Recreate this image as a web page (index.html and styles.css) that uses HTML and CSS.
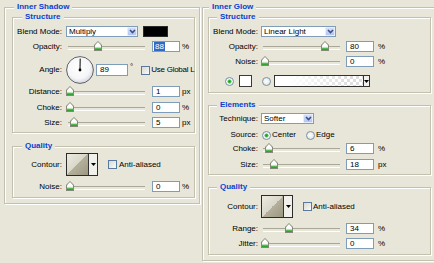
FILE: index.html
```html
<!DOCTYPE html>
<html>

<head>
    <meta charset="utf-8" />
    <title>Layer Style</title>
    <link rel="stylesheet" href="styles.css">
</head>

<body>
    <div class="dialog">
        <!-- Inner Shadow -->
        <fieldset class="group panel panel-left">
            <legend>Inner Shadow</legend>
            <fieldset class="group sub">
                <legend>Structure</legend>
                <div class="row">
                    <span class="lbl">Blend Mode:</span>
                    <span class="select sel-multiply">Multiply<span class="drop"><svg width="7" height="5" viewBox="0 0 7 5"><path d="M1 1l2.5 2.5L6 1" fill="none" stroke="#3c4f80" stroke-width="1.6"/></svg></span></span>
                    <span class="swatch-black"></span>
                </div>
                <div class="row">
                    <span class="lbl">Opacity:</span>
                    <span class="slider"><span class="thumb" style="left:28px"></span></span>
                    <span class="field focus"><span class="selected">88</span></span>
                    <span class="unit">%</span>
                </div>
                <div class="row row-angle">
                    <span class="lbl">Angle:</span>
                    <svg class="dial" width="28" height="28" viewBox="0 0 28 28">
                        <defs>
                            <radialGradient id="dialFill" cx="45%" cy="40%" r="60%">
                                <stop offset="0" stop-color="#ffffff"/>
                                <stop offset="0.7" stop-color="#f6f6f8"/>
                                <stop offset="1" stop-color="#d6d7de"/>
                            </radialGradient>
                        </defs>
                        <circle cx="14" cy="14" r="13.4" fill="url(#dialFill)" stroke="#5f6168" stroke-width="1"/>
                        <path d="M14 14L14.2 2.6" stroke="#000" stroke-width="1"/>
                        <circle cx="14" cy="14" r="1.4" fill="#000"/>
                    </svg>
                    <span class="field field-angle">89</span>
                    <span class="unit deg">°</span>
                    <span class="check"></span>
                    <span class="check-text global">Use Global L</span>
                </div>
                <div class="row mt2">
                    <span class="lbl">Distance:</span>
                    <span class="slider"><span class="thumb" style="left:0px"></span></span>
                    <span class="field">1</span>
                    <span class="unit">px</span>
                </div>
                <div class="row mt5">
                    <span class="lbl">Choke:</span>
                    <span class="slider"><span class="thumb" style="left:0px"></span></span>
                    <span class="field">0</span>
                    <span class="unit">%</span>
                </div>
                <div class="row">
                    <span class="lbl">Size:</span>
                    <span class="slider"><span class="thumb" style="left:4px"></span></span>
                    <span class="field">5</span>
                    <span class="unit">px</span>
                </div>
            </fieldset>
            <fieldset class="group sub sub-quality">
                <legend>Quality</legend>
                <div class="row row-contour mt2">
                    <span class="lbl">Contour:</span>
                    <span class="contour"><span class="curve"></span><span class="mini-drop"><svg width="5" height="3" viewBox="0 0 5 3"><path d="M0 0h5L2.5 3z" fill="#000"/></svg></span></span>
                    <span class="check check-aa"></span>
                    <span class="check-text">Anti-aliased</span>
                </div>
                <div class="row mt5">
                    <span class="lbl">Noise:</span>
                    <span class="slider"><span class="thumb" style="left:0px"></span></span>
                    <span class="field">0</span>
                    <span class="unit">%</span>
                </div>
            </fieldset>
        </fieldset>

        <!-- Inner Glow -->
        <fieldset class="group panel panel-right">
            <legend>Inner Glow</legend>
            <fieldset class="group sub">
                <legend>Structure</legend>
                <div class="row">
                    <span class="lbl">Blend Mode:</span>
                    <span class="select sel-linear">Linear Light<span class="drop"><svg width="7" height="5" viewBox="0 0 7 5"><path d="M1 1l2.5 2.5L6 1" fill="none" stroke="#3c4f80" stroke-width="1.6"/></svg></span></span>
                </div>
                <div class="row">
                    <span class="lbl">Opacity:</span>
                    <span class="slider"><span class="thumb" style="left:60px"></span></span>
                    <span class="field">80</span>
                    <span class="unit">%</span>
                </div>
                <div class="row">
                    <span class="lbl">Noise:</span>
                    <span class="slider"><span class="thumb" style="left:0px"></span></span>
                    <span class="field">0</span>
                    <span class="unit">%</span>
                </div>
                <div class="row row-color mt8">
                    <span class="radio on"></span>
                    <span class="swatch-white"></span>
                    <span class="radio radio-grad"></span>
                    <span class="gradient"><span class="grad-fill"></span><span class="mini-drop"><svg width="5" height="3" viewBox="0 0 5 3"><path d="M0 0h5L2.5 3z" fill="#000"/></svg></span></span>
                </div>
            </fieldset>
            <fieldset class="group sub sub-elements">
                <legend>Elements</legend>
                <div class="row mt3">
                    <span class="lbl">Technique:</span>
                    <span class="select sel-softer">Softer<span class="drop"><svg width="7" height="5" viewBox="0 0 7 5"><path d="M1 1l2.5 2.5L6 1" fill="none" stroke="#3c4f80" stroke-width="1.6"/></svg></span></span>
                </div>
                <div class="row row-source mt6">
                    <span class="lbl">Source:</span>
                    <span class="radio on"></span>
                    <span class="radio-text">Center</span>
                    <span class="radio radio-edge"></span>
                    <span class="radio-text">Edge</span>
                </div>
                <div class="row mt3">
                    <span class="lbl">Choke:</span>
                    <span class="slider"><span class="thumb" style="left:4px"></span></span>
                    <span class="field">6</span>
                    <span class="unit">%</span>
                </div>
                <div class="row mt5">
                    <span class="lbl">Size:</span>
                    <span class="slider"><span class="thumb" style="left:9px"></span></span>
                    <span class="field">18</span>
                    <span class="unit">px</span>
                </div>
            </fieldset>
            <fieldset class="group sub sub-quality">
                <legend>Quality</legend>
                <div class="row row-contour mt3">
                    <span class="lbl">Contour:</span>
                    <span class="contour"><span class="curve"></span><span class="mini-drop"><svg width="5" height="3" viewBox="0 0 5 3"><path d="M0 0h5L2.5 3z" fill="#000"/></svg></span></span>
                    <span class="check check-aa"></span>
                    <span class="check-text">Anti-aliased</span>
                </div>
                <div class="row mt5">
                    <span class="lbl">Range:</span>
                    <span class="slider"><span class="thumb" style="left:24px"></span></span>
                    <span class="field">34</span>
                    <span class="unit">%</span>
                </div>
                <div class="row">
                    <span class="lbl">Jitter:</span>
                    <span class="slider"><span class="thumb" style="left:0px"></span></span>
                    <span class="field">0</span>
                    <span class="unit">%</span>
                </div>
            </fieldset>
        </fieldset>
    </div>
</body>

</html>
```

FILE: styles.css
```css
* {
    box-sizing: border-box;
}

body {
    margin: 0;
    width: 434px;
    height: 263px;
    overflow: hidden;
    background: #e8e6d9;
    font: 8px/10px "Liberation Sans", Arial, sans-serif;
    color: #000;
}

.dialog {
    display: flex;
    align-items: flex-start;
    padding: 2px 0 0 4px;
}

/* etched group boxes */
.group {
    margin: 0;
    min-width: 0;
    border: 1px solid #c3c0b0;
    box-shadow: inset 1px 1px 0 #fff, 1px 1px 0 #fff;
}

.group legend {
    height: 10px;
    padding: 0 3px;
    line-height: 10px;
    font-weight: bold;
    color: #0a3fd0;
    background: #e8e6d9;
}

.panel-left {
    flex: none;
    width: 196px;
    padding: 0 4px 5px 7px;
}

.panel-left > legend {
    margin-left: 2px;
}

.panel-right {
    flex: none;
    width: 240px;
    margin-left: 2px;
    padding: 0 10px 5px 5px;
}

.panel-right > legend {
    margin-left: 1px;
}

.sub {
    width: 183px;
    padding: 0 0 4px;
}

.sub > legend {
    margin-left: 9px;
}

.sub-quality {
    margin-top: 8px;
    padding-bottom: 5px;
}

.panel-right .sub {
    width: 223px;
    padding-bottom: 5px;
}

.panel-right .sub > legend {
    margin-left: 8px;
}

.panel-right .sub-elements,
.panel-right .sub-quality {
    margin-top: 7px;
}

.panel-right .sub-elements {
    padding-bottom: 4px;
}

/* rows */
.row {
    display: flex;
    align-items: center;
    height: 11px;
    margin-top: 4px;
    white-space: nowrap;
}

.row > * {
    flex: none;
}

.mt2 { margin-top: 2px; }
.mt3 { margin-top: 3px; }
.mt5 { margin-top: 5px; }
.mt6 { margin-top: 6px; }
.mt8 { margin-top: 8px; }

.row-angle {
    height: 28px;
}

.row-contour {
    height: 23px;
}

.row-color {
    height: 12px;
}

.row-source {
    height: 10px;
}

.lbl {
    width: 49px;
    margin-right: 4px;
    text-align: right;
}

.panel-right .lbl {
    margin-right: 3px;
}

/* dropdowns */
.select {
    display: flex;
    align-items: center;
    height: 11px;
    padding-left: 2px;
    border: 1px solid #7f9db9;
    background: #fff;
    line-height: 9px;
}

.select .drop {
    display: flex;
    align-items: center;
    justify-content: center;
    width: 10px;
    height: 9px;
    margin-left: auto;
    background: linear-gradient(#d3defb, #b3c5f2);
    border: 1px solid #e6edfd;
    border-radius: 1px;
}

.sel-multiply {
    width: 72px;
    margin-right: 5px;
}

.sel-linear {
    width: 75px;
}

.sel-softer {
    width: 53px;
}

.swatch-black {
    width: 25px;
    height: 11px;
    background: #000;
    border: 1px solid #2a2a2a;
}

/* sliders */
.slider {
    position: relative;
    width: 82px;
    height: 11px;
    margin-right: 4px;
}

.panel-right .slider {
    margin-right: 3px;
}

.slider::before {
    content: "";
    position: absolute;
    left: 2px;
    right: 3px;
    top: 5px;
    height: 2px;
    border-top: 1px solid #a9a798;
    border-bottom: 1px solid #fff;
}

.thumb {
    position: absolute;
    top: 0;
    width: 8px;
    height: 10px;
    background: #868979;
    clip-path: polygon(0 40%, 50% 0, 100% 40%, 100% 100%, 0 100%);
}

.thumb::after {
    content: "";
    position: absolute;
    left: 1px;
    top: 1px;
    right: 1px;
    bottom: 1px;
    background: linear-gradient(#fff 50%, #ecece6 68%, #6ccc6c 70%, #1f9a1f);
    clip-path: polygon(0 40%, 50% 0, 100% 40%, 100% 100%, 0 100%);
}

/* text fields */
.field {
    width: 28px;
    height: 11px;
    margin-right: 2px;
    padding-left: 3px;
    border: 1px solid #7f9db9;
    background: #fff;
    line-height: 9px;
}

.panel-right .field {
    margin-right: 4px;
}

.field.focus {
    padding-left: 0;
}

.selected {
    display: inline-block;
    margin-left: 1px;
    padding: 0 1px;
    background: #316ac5;
    color: #fff;
}

.dial {
    margin-right: 2px;
}

.field-angle {
    width: 32px;
    height: 12px;
    line-height: 10px;
}

.deg {
    align-self: flex-start;
    margin-top: 6px;
}

/* checkboxes and radios */
.check {
    width: 9px;
    height: 9px;
    margin-left: 8px;
    border: 1px solid #5a79a0;
    background: linear-gradient(135deg, #d9d9d0, #fbfbf8);
}

.check-aa {
    margin-left: 10px;
}

.check-text {
    margin-left: 1px;
}

.global {
    letter-spacing: -0.25px;
}

.panel-left .check-aa + .check-text {
    margin-left: 2px;
}

.radio {
    width: 9px;
    height: 9px;
    border: 1px solid #7890ac;
    border-radius: 50%;
    background: radial-gradient(circle at 45% 45%, #fff, #dcdcd3);
}

.radio.on {
    background: radial-gradient(circle, #1f9a1f 0, #3fb63f 1.3px, #7dd07d 1.9px, #fff 2.4px, #dcdcd3 100%);
}

.row-color .radio.on {
    margin-left: 16px;
}

.row-source .radio.on {
    margin-left: 1px;
}

.radio-text {
    margin-left: 1px;
}

.radio-edge {
    margin-left: 10px;
}

.swatch-white {
    width: 13px;
    height: 12px;
    margin-left: 5px;
    background: #fff;
    border: 1px solid #3a3a3a;
}

.radio-grad {
    margin-left: 10px;
}

.gradient {
    display: flex;
    width: 96px;
    height: 12px;
    margin-left: 3px;
    border: 1px solid #333;
    background: #fff;
}

.grad-fill {
    flex: 1;
    background:
        linear-gradient(to right, #fff 15%, rgba(255, 255, 255, 0) 85%),
        repeating-conic-gradient(#dedede 0 25%, #fff 0 50%) 0 0 / 6px 6px;
}

.mini-drop {
    display: flex;
    align-items: center;
    justify-content: center;
    width: 6px;
    border-left: 1px solid #333;
    background: #f1f0ea;
}

/* contour preview */
.contour {
    display: flex;
    width: 32px;
    height: 23px;
    border: 1px solid #2b2b2b;
}

.curve {
    flex: 1;
    background: linear-gradient(to bottom right, #ecebe1 0, #d9d7c9 50%, #b4b09b 50%, #9b9781 100%);
}

.contour .mini-drop {
    width: 9px;
}
```
